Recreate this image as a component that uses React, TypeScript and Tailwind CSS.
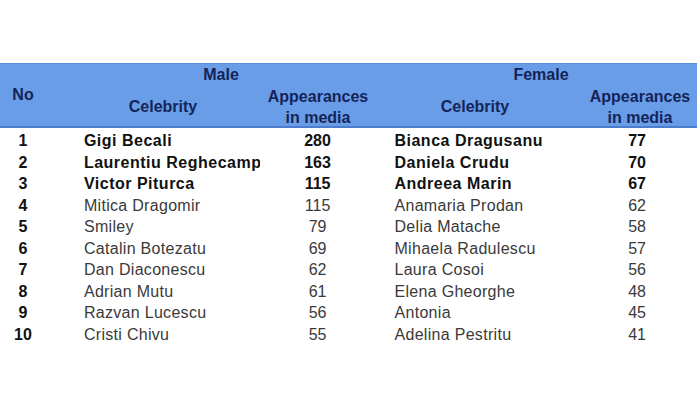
import React from "react";

type Row = { no: number; m: string; ma: number; f: string; fa: number; bold: boolean };

const rows: Row[] = [
  { no: 1, m: "Gigi Becali", ma: 280, f: "Bianca Dragusanu", fa: 77, bold: true },
  { no: 2, m: "Laurentiu Reghecamp", ma: 163, f: "Daniela Crudu", fa: 70, bold: true },
  { no: 3, m: "Victor Piturca", ma: 115, f: "Andreea Marin", fa: 67, bold: true },
  { no: 4, m: "Mitica Dragomir", ma: 115, f: "Anamaria Prodan", fa: 62, bold: false },
  { no: 5, m: "Smiley", ma: 79, f: "Delia Matache", fa: 58, bold: false },
  { no: 6, m: "Catalin Botezatu", ma: 69, f: "Mihaela Radulescu", fa: 57, bold: false },
  { no: 7, m: "Dan Diaconescu", ma: 62, f: "Laura Cosoi", fa: 56, bold: false },
  { no: 8, m: "Adrian Mutu", ma: 61, f: "Elena Gheorghe", fa: 48, bold: false },
  { no: 9, m: "Razvan Lucescu", ma: 56, f: "Antonia", fa: 45, bold: false },
  { no: 10, m: "Cristi Chivu", ma: 55, f: "Adelina Pestritu", fa: 41, bold: false },
];

export default function App() {
  return (
    <div className="w-[700px] h-[403px] bg-white overflow-hidden pt-[63px] font-['Liberation_Sans',Arial,sans-serif] text-[16px]">
      <div className="w-[697px] h-[65px] bg-[#6a9de8] border-t border-[#5b8cd8] border-b-2 border-b-[#4c7dcc] flex text-[#142457] font-bold">
        <div className="w-[56px] pr-[10px] flex items-center justify-center">No</div>
        <div className="w-[330px] flex flex-col">
          <div className="h-[22px] leading-[22px] text-center">Male</div>
          <div className="flex-1 flex">
            <div className="ml-[28px] w-[158px] flex items-center justify-center whitespace-nowrap">Celebrity</div>
            <div className="ml-[20px] w-[112px] flex flex-col items-center justify-center leading-[21px] whitespace-nowrap">
              <span>Appearances</span>
              <span>in media</span>
            </div>
          </div>
        </div>
        <div className="w-[310px] flex flex-col">
          <div className="h-[22px] leading-[22px] text-center">Female</div>
          <div className="flex-1 flex">
            <div className="w-[178px] flex items-center justify-center whitespace-nowrap">Celebrity</div>
            <div className="ml-[20px] w-[112px] flex flex-col items-center justify-center leading-[21px] whitespace-nowrap">
              <span>Appearances</span>
              <span>in media</span>
            </div>
          </div>
        </div>
      </div>
      <div className="pt-[2px]">
        {rows.map((r) => (
          <div
            key={r.no}
            className={`flex h-[21.5px] leading-[21.5px] whitespace-nowrap ${r.bold ? "font-bold text-[#111111] tracking-[0.5px]" : "text-[#3a3a3a] tracking-[0.3px]"}`}
          >
            <div className="w-[46px] text-center font-bold text-[#111111] tracking-normal">{r.no}</div>
            <div className="ml-[38px] w-[178px]">
              <div className="w-[176px] overflow-hidden">{r.m}</div>
            </div>
            <div className="w-[112px] text-center tracking-normal">{r.ma}</div>
            <div className="ml-[21px] w-[180px]">{r.f}</div>
            <div className="w-[126px] text-center tracking-normal">{r.fa}</div>
          </div>
        ))}
      </div>
    </div>
  );
}
